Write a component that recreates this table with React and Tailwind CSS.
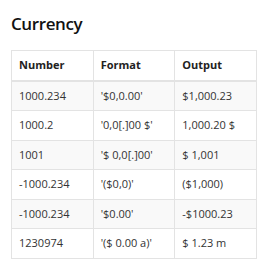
const rows = [
  ['1000.234', "'$0,0.00'", '$1,000.23'],
  ['1000.2', "'0,0[.]00 $'", '1,000.20 $'],
  ['1001', "'$ 0,0[.]00'", '$ 1,001'],
  ['-1000.234', "'($0,0)'", '($1,000)'],
  ['-1000.234', "'$0.00'", '-$1000.23'],
  ['1230974', "'($ 0.00 a)'", '$ 1.23 m'],
];

export default function App() {
  return (
    <div className="min-h-screen bg-white pl-[11px] pr-[3px] pt-[13px] text-[#333] [font-family:'Open_Sans','Noto_Sans',sans-serif]">
      <h2 className="text-[17px] font-semibold leading-[22px] mb-[15px] tracking-[-0.4px] text-[#111]">Currency</h2>
      <table className="w-full table-fixed border-collapse border border-[#e3e3e3] text-[11px] leading-[16.5px]">
        <thead>
          <tr className="text-[#222]">
            <th className="border border-b-2 border-[#e3e3e3] px-[7px] py-[6px] text-left font-bold">Number</th>
            <th className="border border-b-2 border-[#e3e3e3] px-[7px] py-[6px] text-left font-bold">Format</th>
            <th className="border border-b-2 border-[#e3e3e3] px-[7px] py-[6px] text-left font-bold">Output</th>
          </tr>
        </thead>
        <tbody>
          {rows.map((r, i) => (
            <tr key={i} className={i % 2 === 0 ? 'bg-[#f9f9f9]' : 'bg-white'}>
              {r.map((c, j) => (
                <td key={j} className="border border-[#e3e3e3] px-[7px] py-[6px] whitespace-nowrap">{c}</td>
              ))}
            </tr>
          ))}
        </tbody>
      </table>
    </div>
  );
}
